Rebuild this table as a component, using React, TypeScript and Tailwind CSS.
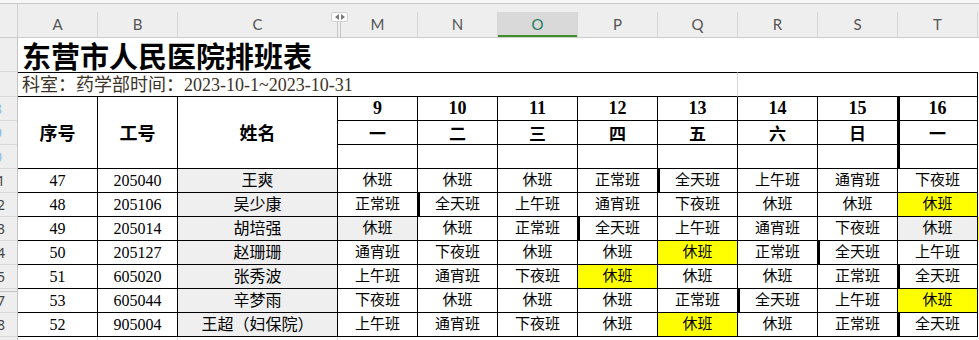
import React from "react";

type Row = {
  rowNo: string;
  no: string;
  id: string;
  name: string;
  shifts: string[];
  yellow?: number[];
  gray?: number[];
  thick: number;
  hiddenAbove?: boolean;
  tail?: boolean;
};

const letters = ["M", "N", "O", "P", "Q", "R", "S", "T"];
const dates = ["9", "10", "11", "12", "13", "14", "15", "16"];
const weeks = ["一", "二", "三", "四", "五", "六", "日", "一"];

const rows: Row[] = [
  { rowNo: "11", no: "47", id: "205040", name: "王爽", shifts: ["休班", "休班", "休班", "正常班", "全天班", "上午班", "通宵班", "下夜班"], thick: 4 },
  { rowNo: "12", no: "48", id: "205106", name: "吴少康", shifts: ["正常班", "全天班", "上午班", "通宵班", "下夜班", "休班", "休班", "休班"], yellow: [7], thick: 1 },
  { rowNo: "13", no: "49", id: "205014", name: "胡培强", shifts: ["休班", "休班", "正常班", "全天班", "上午班", "通宵班", "下夜班", "休班"], gray: [0, 7], thick: 3, tail: true },
  { rowNo: "14", no: "50", id: "205127", name: "赵珊珊", shifts: ["通宵班", "下夜班", "休班", "休班", "休班", "正常班", "全天班", "上午班"], yellow: [4], thick: 6 },
  { rowNo: "15", no: "51", id: "605020", name: "张秀波", shifts: ["上午班", "通宵班", "下夜班", "休班", "休班", "休班", "正常班", "全天班"], yellow: [3], thick: 7 },
  { rowNo: "17", no: "53", id: "605044", name: "辛梦雨", shifts: ["下夜班", "休班", "休班", "休班", "正常班", "全天班", "上午班", "休班"], yellow: [7], thick: 5, hiddenAbove: true },
  { rowNo: "18", no: "52", id: "905004", name: "王超（妇保院）", shifts: ["上午班", "通宵班", "下夜班", "休班", "休班", "休班", "正常班", "全天班"], yellow: [4], thick: 7 },
];

const cell = "flex items-center justify-center border-r border-b border-black";

function RowHead({ label, blue, hidden }: { label?: string; blue?: boolean; hidden?: boolean }) {
  return (
    <div
      className={
        "flex h-full w-[18px] shrink-0 items-center justify-end overflow-hidden border-r border-b border-r-[#c4c4c4] border-b-[#d8d8d8] bg-[#eeeeee] font-['Noto_Sans',sans-serif] text-[14px] " +
        (blue ? "pr-[15px] text-[#8cbce8] " : "pr-[12px] text-[#444444] ") +
        (hidden ? "shadow-[inset_0_2px_0_#eeeeee,inset_0_3px_0_#c4c4c4]" : "")
      }
    >
      <span className="whitespace-nowrap">{label}</span>
    </div>
  );
}

export default function App() {
  return (
    <div className="h-[340px] w-[979px] overflow-hidden bg-white font-['Liberation_Serif','Noto_Sans_CJK_SC',serif] text-black">
      <div className="h-[4px] border-b border-[#c8c8c8] bg-[#f7f7f7]" />

      {/* column letters */}
      <div className="relative flex h-[34px] items-end border-b border-[#cccccc] bg-[#eeeeee] font-['Lato',sans-serif] text-[15px] text-[#555555]">
        <div className="h-full w-[18px] shrink-0 border-r border-[#d0d0d0]" />
        <div className="flex h-[25px] w-[80px] items-center justify-center border-r border-[#d6d6d6]">A</div>
        <div className="flex h-[25px] w-[80px] items-center justify-center border-r border-[#d6d6d6]">B</div>
        <div className="flex h-[25px] w-[160px] items-center justify-center border-r border-[#c8c8c8]">C</div>
        {letters.map((l, i) => (
          <div
            key={l}
            className={
              "flex h-[25px] w-[80px] items-center justify-center border-r border-[#d6d6d6] " +
              (l === "O" ? "bg-[#d9d9d9] text-[#1d7c5c] shadow-[inset_0_-2px_0_#3d8f2c] " : "") +
              (i === 0 ? "shadow-[inset_2px_0_0_#eeeeee,inset_3px_0_0_#c8c8c8]" : "")
            }
          >
            {l}
          </div>
        ))}
        <div className="h-[25px] flex-1" />
        <div className="absolute left-[331px] top-[8px] flex h-[10px] w-[17px] items-center justify-center gap-[2px] rounded-[2px] border border-[#d0d0d0] bg-white">
          <span className="h-0 w-0 border-y-[3px] border-r-[4px] border-y-transparent border-r-[#777777]" />
          <span className="h-0 w-0 border-y-[3px] border-l-[4px] border-y-transparent border-l-[#777777]" />
        </div>
      </div>

      {/* title */}
      <div className="flex h-[34px]">
        <RowHead />
        <div className="flex flex-1 items-center pl-[4px] font-['Noto_Sans_CJK_SC',sans-serif] text-[29px] font-bold leading-none">
          东营市人民医院排班表
        </div>
      </div>

      {/* department / date */}
      <div className="flex h-[25px]">
        <RowHead />
        <div className="flex w-[720px] items-center border-y border-r border-black border-r-[#d9d9d9] pl-[4px] text-[18px] leading-none text-[#3b3226]">
          科室：药学部时间：2023-10-1~2023-10-31
        </div>
        <div className="w-[240px] border-y border-r border-black" />
      </div>

      {/* header block */}
      <div className="flex h-[72px]">
        <div className="flex w-[18px] shrink-0 flex-col">
          <div className="h-[24px]"><RowHead label="8" blue /></div>
          <div className="h-[24px]"><RowHead label="9" blue /></div>
          <div className="h-[24px]"><RowHead label="10" blue /></div>
        </div>
        <div className={cell + " w-[80px] font-['Noto_Sans_CJK_SC',sans-serif] text-[18px] font-bold"}>序号</div>
        <div className={cell + " w-[80px] font-['Noto_Sans_CJK_SC',sans-serif] text-[18px] font-bold"}>工号</div>
        <div className={cell + " w-[160px] font-['Noto_Sans_CJK_SC',sans-serif] text-[18px] font-bold"}>姓名</div>
        <div className="flex w-[640px] flex-col">
          <div className="flex h-[24px]">
            {dates.map((d, i) => (
              <div key={i} className={cell + " w-[80px] text-[18px] font-bold " + (i === 7 ? "shadow-[inset_2px_0_0_#000]" : "")}>
                {d}
              </div>
            ))}
          </div>
          <div className="flex h-[24px]">
            {weeks.map((w, i) => (
              <div key={i} className={cell + " w-[80px] font-['Noto_Sans_CJK_SC',sans-serif] text-[17px] font-bold " + (i === 7 ? "shadow-[inset_2px_0_0_#000]" : "")}>
                {w}
              </div>
            ))}
          </div>
          <div className="flex h-[24px]">
            {weeks.map((_, i) => (
              <div key={i} className={cell + " w-[80px] " + (i === 7 ? "shadow-[inset_2px_0_0_#000]" : "")} />
            ))}
          </div>
        </div>
      </div>

      {/* staff rows */}
      {rows.map((r) => (
        <div key={r.no} className="flex h-[24px]">
          <RowHead label={r.rowNo} hidden={r.hiddenAbove} />
          <div className={cell + " w-[80px] text-[16px]"}>{r.no}</div>
          <div className={cell + " w-[80px] text-[16px]"}>{r.id}</div>
          <div className={cell + " w-[160px] bg-[#efefef] text-[16px]"}>{r.name}</div>
          {r.shifts.map((s, i) => (
            <div
              key={i}
              className={
                cell +
                " w-[80px] text-[15px] " +
                (r.yellow?.includes(i) ? "bg-[#ffff00] " : "") +
                (r.gray?.includes(i) ? "bg-[#efefef] " : "") +
                (r.thick === i ? "shadow-[inset_2px_0_0_#000]" : "")
              }
            >
              {s}
            </div>
          ))}
          <div className={"flex-1 " + (r.tail ? "bg-[#ffff00]" : "")} />
        </div>
      ))}

      <div className="flex h-[4px]">
        <div className="w-[18px] shrink-0 border-r border-[#c4c4c4] bg-[#eeeeee]" />
        <div className="w-[80px] border-r border-[#d9d9d9]" />
        <div className="w-[80px] border-r border-[#d9d9d9]" />
        <div className="w-[160px] border-r border-[#d9d9d9]" />
      </div>
    </div>
  );
}
